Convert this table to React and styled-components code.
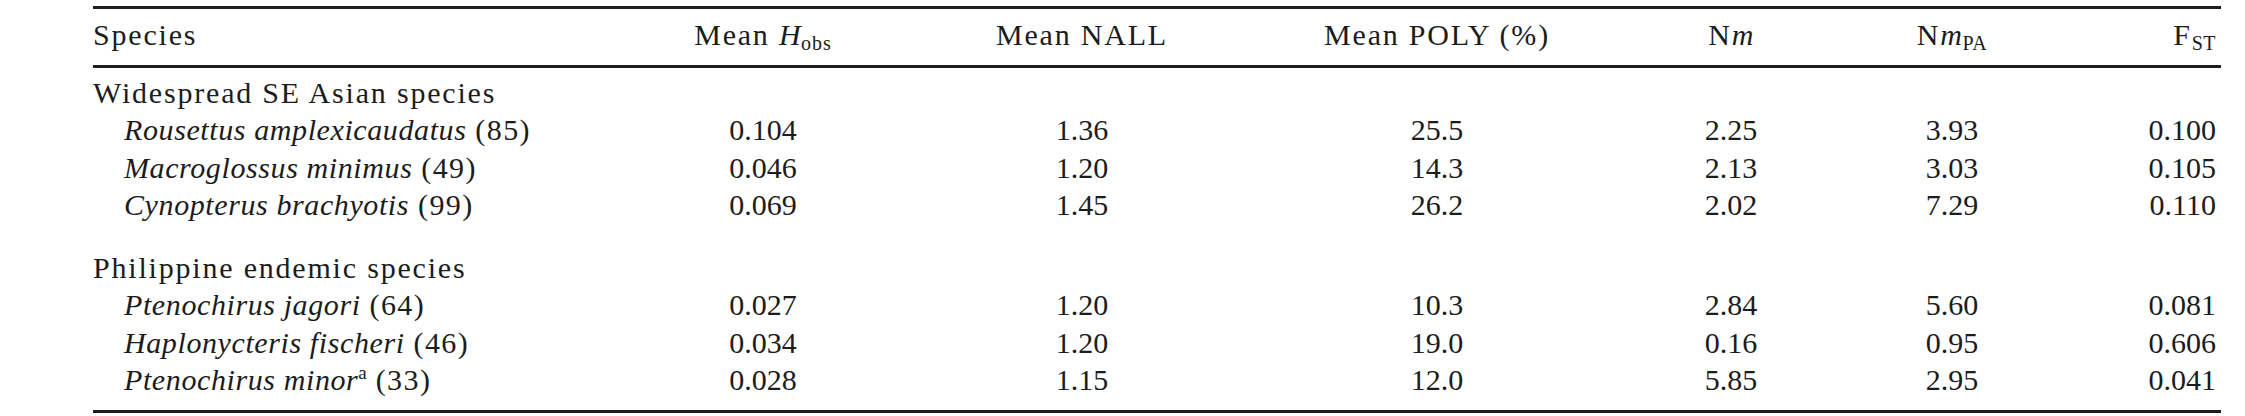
import React from "react";
import styled, { createGlobalStyle } from "styled-components";

const GlobalStyle = createGlobalStyle`
  body {
    margin: 0;
    background: #ffffff;
    color: #1c1c1c;
    font-family: "Liberation Serif", "Times New Roman", serif;
  }
`;

const COLUMNS = "507px 326px 312px 398px 190px 252px 1fr";

const Table = styled.div`
  width: 2128px;
  margin: 6px 0 0 93px;
  font-size: 30px;
`;

const Head = styled.div`
  border-top: 3px solid #1e1e1e;
  border-bottom: 3px solid #1e1e1e;
  padding: 7px 0 11px;
`;

const Body = styled.div`
  border-bottom: 3px solid #1e1e1e;
  padding: 6px 0 11px;
`;

const Row = styled.div`
  display: grid;
  grid-template-columns: ${COLUMNS};
  height: 37.5px;
  line-height: 37.5px;
  margin-top: ${({ $spaced }) => ($spaced ? "25px" : "0")};
`;

const Cell = styled.div`
  text-align: ${({ $align }) => $align || "center"};
  padding-right: ${({ $align }) => ($align === "right" ? "5px" : "0")};
  letter-spacing: ${({ $text }) => ($text ? "1.8px" : "0")};
  white-space: nowrap;
`;

const Label = styled.div`
  letter-spacing: 1.8px;
  white-space: nowrap;
`;

const Name = styled.div`
  padding-left: 31px;
  white-space: nowrap;
  letter-spacing: 1.4px;
`;

const Taxon = styled.i`
  letter-spacing: 0.6px;
`;

const Em = styled.i`
  letter-spacing: 0.4px;
`;

const Sub = styled.sub`
  font-size: 20px;
  line-height: 0;
  vertical-align: -5px;
  letter-spacing: ${({ $caps }) => ($caps ? "0.5px" : "1px")};
`;

const Sup = styled.sup`
  font-size: 19px;
  line-height: 0;
  vertical-align: 11px;
  letter-spacing: 0;
`;

const groups = [
  {
    title: "Widespread SE Asian species",
    rows: [
      ["Rousettus amplexicaudatus", "85", null, "0.104", "1.36", "25.5", "2.25", "3.93", "0.100"],
      ["Macroglossus minimus", "49", null, "0.046", "1.20", "14.3", "2.13", "3.03", "0.105"],
      ["Cynopterus brachyotis", "99", null, "0.069", "1.45", "26.2", "2.02", "7.29", "0.110"],
    ],
  },
  {
    title: "Philippine endemic species",
    rows: [
      ["Ptenochirus jagori", "64", null, "0.027", "1.20", "10.3", "2.84", "5.60", "0.081"],
      ["Haplonycteris fischeri", "46", null, "0.034", "1.20", "19.0", "0.16", "0.95", "0.606"],
      ["Ptenochirus minor", "33", "a", "0.028", "1.15", "12.0", "5.85", "2.95", "0.041"],
    ],
  },
];

const App = () => {
  return (
    <>
      <GlobalStyle />
      <Table>
        <Head>
          <Row>
            <Label>Species</Label>
            <Cell $text>
              Mean <Em>H</Em>
              <Sub>obs</Sub>
            </Cell>
            <Cell $text>Mean NALL</Cell>
            <Cell $text>Mean POLY (%)</Cell>
            <Cell $text>
              N<Em>m</Em>
            </Cell>
            <Cell $text>
              N<Em>m</Em>
              <Sub $caps>PA</Sub>
            </Cell>
            <Cell $text $align="right">
              F<Sub $caps>ST</Sub>
            </Cell>
          </Row>
        </Head>
        <Body>
          {groups.map((group, g) => (
            <React.Fragment key={group.title}>
              <Row $spaced={g > 0}>
                <Label>{group.title}</Label>
              </Row>
              {group.rows.map(([name, n, note, ...vals]) => (
                <Row key={name}>
                  <Name>
                    <Taxon>{name}</Taxon>
                    {note && <Sup>{note}</Sup>} ({n})
                  </Name>
                  {vals.map((v, i) => (
                    <Cell key={i} $align={i === vals.length - 1 ? "right" : "center"}>
                      {v}
                    </Cell>
                  ))}
                </Row>
              ))}
            </React.Fragment>
          ))}
        </Body>
      </Table>
    </>
  );
};

export default App;
